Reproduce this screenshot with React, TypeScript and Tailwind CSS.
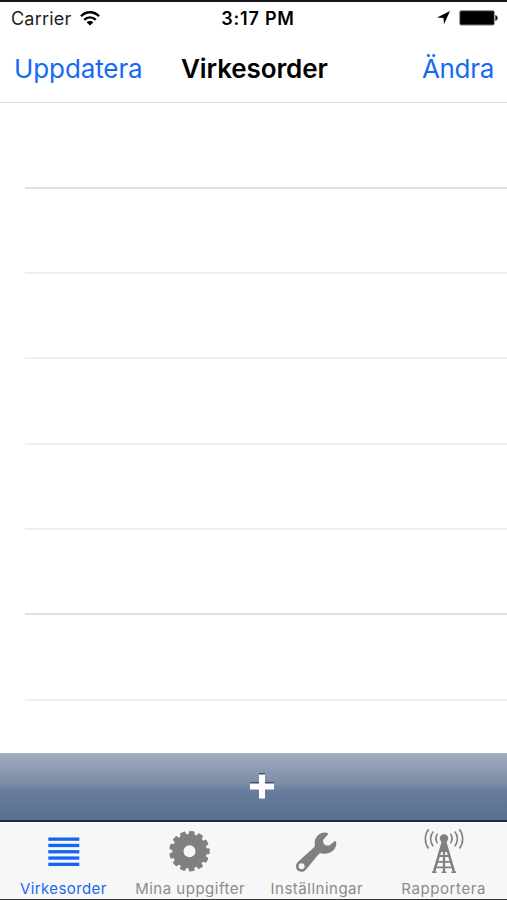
import React from 'react';

interface Tab {
    label: string;
    icon: React.ReactNode;
    active?: boolean;
    labelClass: string;
}

const rows = [1, 2, 3, 4, 5, 6, 7];
const rowLines = [
    'h-[86px] border-[#e0e0e2]',
    'h-[85px] border-[#efeff0]',
    'h-[85px] border-[#efeff0]',
    'h-[86px] border-[#efeff0]',
    'h-[85px] border-[#efeff0]',
    'h-[85px] border-[#e0e0e2]',
    'h-[86px] border-[#efeff0]',
];

const TEETH = 13;

const WifiIcon = () => (
    <svg width="20" height="15" viewBox="0 0 20 15" fill="none" stroke="#000" strokeWidth="2.3">
        <path d="M1 5.3C6-.1 14-.1 19 5.3" />
        <path d="M4.2 8.9c3.2-3.4 8.4-3.4 11.6 0" />
        <path d="M10 14.6 6.7 11.4c1.8-1.8 4.8-1.8 6.6 0z" fill="#000" stroke="none" />
    </svg>
);

const LocationIcon = () => (
    <svg width="13" height="14" viewBox="0 0 13 14">
        <path d="M13 0 7 13.2 6.5 7 0 6.4z" fill="#000" />
    </svg>
);

const BatteryIcon = () => (
    <svg width="40" height="16" viewBox="0 0 40 16">
        <rect x=".3" y=".3" width="35.4" height="15.2" rx="2" fill="#777" />
        <rect x="1.2" y="1.2" width="33.6" height="13.4" rx="1" fill="#000" />
        <path d="M36.3 5c1.6.6 2.4 1.6 2.4 3s-.8 2.4-2.4 3z" fill="#222" />
    </svg>
);

const ListIcon = () => (
    <svg width="44" height="48" viewBox="0 0 44 48" fill="#1565f5">
        {[15.7, 22, 28.3, 34.6, 40.9].map((y) => (
            <rect key={y} x="7.3" y={y - 3.2} width="31" height="3.3" />
        ))}
    </svg>
);

const GearIcon = () => (
    <svg width="44" height="48" viewBox="0 0 44 48">
        <g transform="translate(21.5 26.2)">
            {Array.from({ length: TEETH }, (_, i) => (
                <rect
                    key={i}
                    x="-2.9"
                    y="-20.2"
                    width="5.8"
                    height="7"
                    rx="1.2"
                    fill="#808080"
                    transform={`rotate(${7 + (i * 360) / TEETH})`}
                />
            ))}
            <circle r="11.6" fill="none" stroke="#808080" strokeWidth="11.2" />
        </g>
    </svg>
);

const WrenchIcon = () => (
    <svg width="44" height="48" viewBox="0 0 44 48" fill="#808080">
        <path
            fillRule="evenodd"
            d="M33.4 8.2C26.2 5.4 18.8 11.6 19.8 19c.2 1.6 0 2.6-1.2 3.7L3.3 36.4c-3.2 2.8-2.8 7.4 0 9.4 2.7 1.8 6.2 1 8-1.6L23.4 29.6c1-1.2 2-1.5 3.5-1.1 8.2 1.6 15.6-4.3 14.3-12l-1.4-.5-5.2 4.2c-2.8 1.3-6.6-1-6.6-4.3.2-2 4.2-4.6 5.4-7.7zM6.6 38.2a3 3 0 1 0 0 6 3 3 0 0 0 0-6z"
        />
    </svg>
);

const TowerIcon = () => (
    <svg width="44" height="48" viewBox="0 0 44 48" fill="none" stroke="#808080">
        <circle cx="22" cy="13.5" r="4.2" fill="#808080" stroke="none" />
        <path d="M20.2 17h3.6l1 9h-5.6z" fill="#808080" stroke="none" />
        <path d="M20.8 17 11.8 47.5M23.2 17l9 30.5" strokeWidth="2.6" />
        <path d="M22 16v32" strokeWidth="2.2" />
        <path d="M18 26h8M17 31h10M15.5 36.8h13M13.8 42.3h16.4" strokeWidth="1.8" />
        <path d="M9.8 47.4h4.9M19.6 47.4h4.8M29.3 47.4h4.9" strokeWidth="1.8" />
        <path d="M15.6 8.6c-2.1 3-2.1 6.8 0 9.8M28.4 8.6c2.1 3 2.1 6.8 0 9.8" strokeWidth="1.6" />
        <path d="M11.2 6.4c-3.5 4.3-3.5 10.6 0 15M32.8 6.4c3.5 4.3 3.5 10.6 0 15" strokeWidth="1.6" />
        <path d="M6.6 4.2c-4.4 5.6-4.4 13.7 0 19.4M37.4 4.2c4.4 5.6 4.4 13.7 0 19.4" strokeWidth="1.6" />
    </svg>
);

const tabs: Tab[] = [
    { label: 'Virkesorder', icon: <ListIcon />, active: true, labelClass: 'tracking-[0.4px]' },
    { label: 'Mina uppgifter', icon: <GearIcon />, labelClass: 'tracking-[0.5px]' },
    { label: 'Inställningar', icon: <WrenchIcon />, labelClass: 'tracking-[0.5px]' },
    { label: 'Rapportera', icon: <TowerIcon />, labelClass: 'tracking-[0.6px]' },
];

const App = () => {
    return (
        <div className="flex h-[900px] w-[507px] flex-col overflow-hidden border-t-2 border-b border-t-[#17171b] border-b-[#333338] bg-white font-['Inter',sans-serif] text-black">
            <div className="grid h-[32px] shrink-0 grid-cols-3 items-center whitespace-nowrap text-[18px] leading-none">
                <div className="flex items-center gap-[9px] pl-[11px]">
                    <span className="pt-[2px] tracking-[0.2px] text-[#222]">Carrier</span>
                    <WifiIcon />
                </div>
                <span className="pt-[2px] pl-[9px] text-center font-semibold tracking-[0.8px]">3:17 PM</span>
                <div className="flex items-center justify-end gap-[9px] pr-[8px]">
                    <LocationIcon />
                    <BatteryIcon />
                </div>
            </div>
            <div className="flex h-[69px] shrink-0 items-center border-b border-[#dcdcde] pt-[2px] pl-[14px] pr-[13px] text-[26px] leading-none">
                <button className="w-[167px] text-left tracking-[-0.1px] text-[#1769f5]">Uppdatera</button>
                <h1 className="font-semibold tracking-[-0.1px]">Virkesorder</h1>
                <button className="ml-auto tracking-[-0.3px] text-[#1769f5]">Ändra</button>
            </div>
            <div className="h-[650px] shrink-0 pl-[25px]">
                {rows.map((row, index) => (
                    <div key={row} className={`border-b-2 ${rowLines[index]}`} />
                ))}
            </div>
            <div className="flex h-[69px] shrink-0 items-center justify-center border-b-2 border-t border-t-[#a8b2b9] border-b-[#252b3b] bg-linear-[180deg,#a2acc0_0%,#7b8ca5_46%,#697d9f_54%,#587090_100%] pb-[2px] pl-[17px]">
                <svg width="26" height="28" viewBox="0 0 26 28">
                    <path d="M10 1h6v9h9v6h-9v9h-6v-9H1v-6h9z" fill="#40506c" />
                    <path d="M10 2.4h6v9h9v6h-9v9h-6v-9H1v-6h9z" fill="#fff" />
                </svg>
            </div>
            <div className="grid flex-1 grid-cols-4 bg-[#f7f7f8]">
                {tabs.map((tab) => (
                    <div
                        key={tab.label}
                        className={`flex flex-col items-center text-[15px] leading-[18px] whitespace-nowrap ${tab.active ? 'text-[#1769f5]' : 'text-[#8b8b8b]'}`}
                    >
                        <div className="h-[58px] pt-[3px]">{tab.icon}</div>
                        <span className={tab.labelClass}>{tab.label}</span>
                    </div>
                ))}
            </div>
        </div>
    );
};

export default App;
